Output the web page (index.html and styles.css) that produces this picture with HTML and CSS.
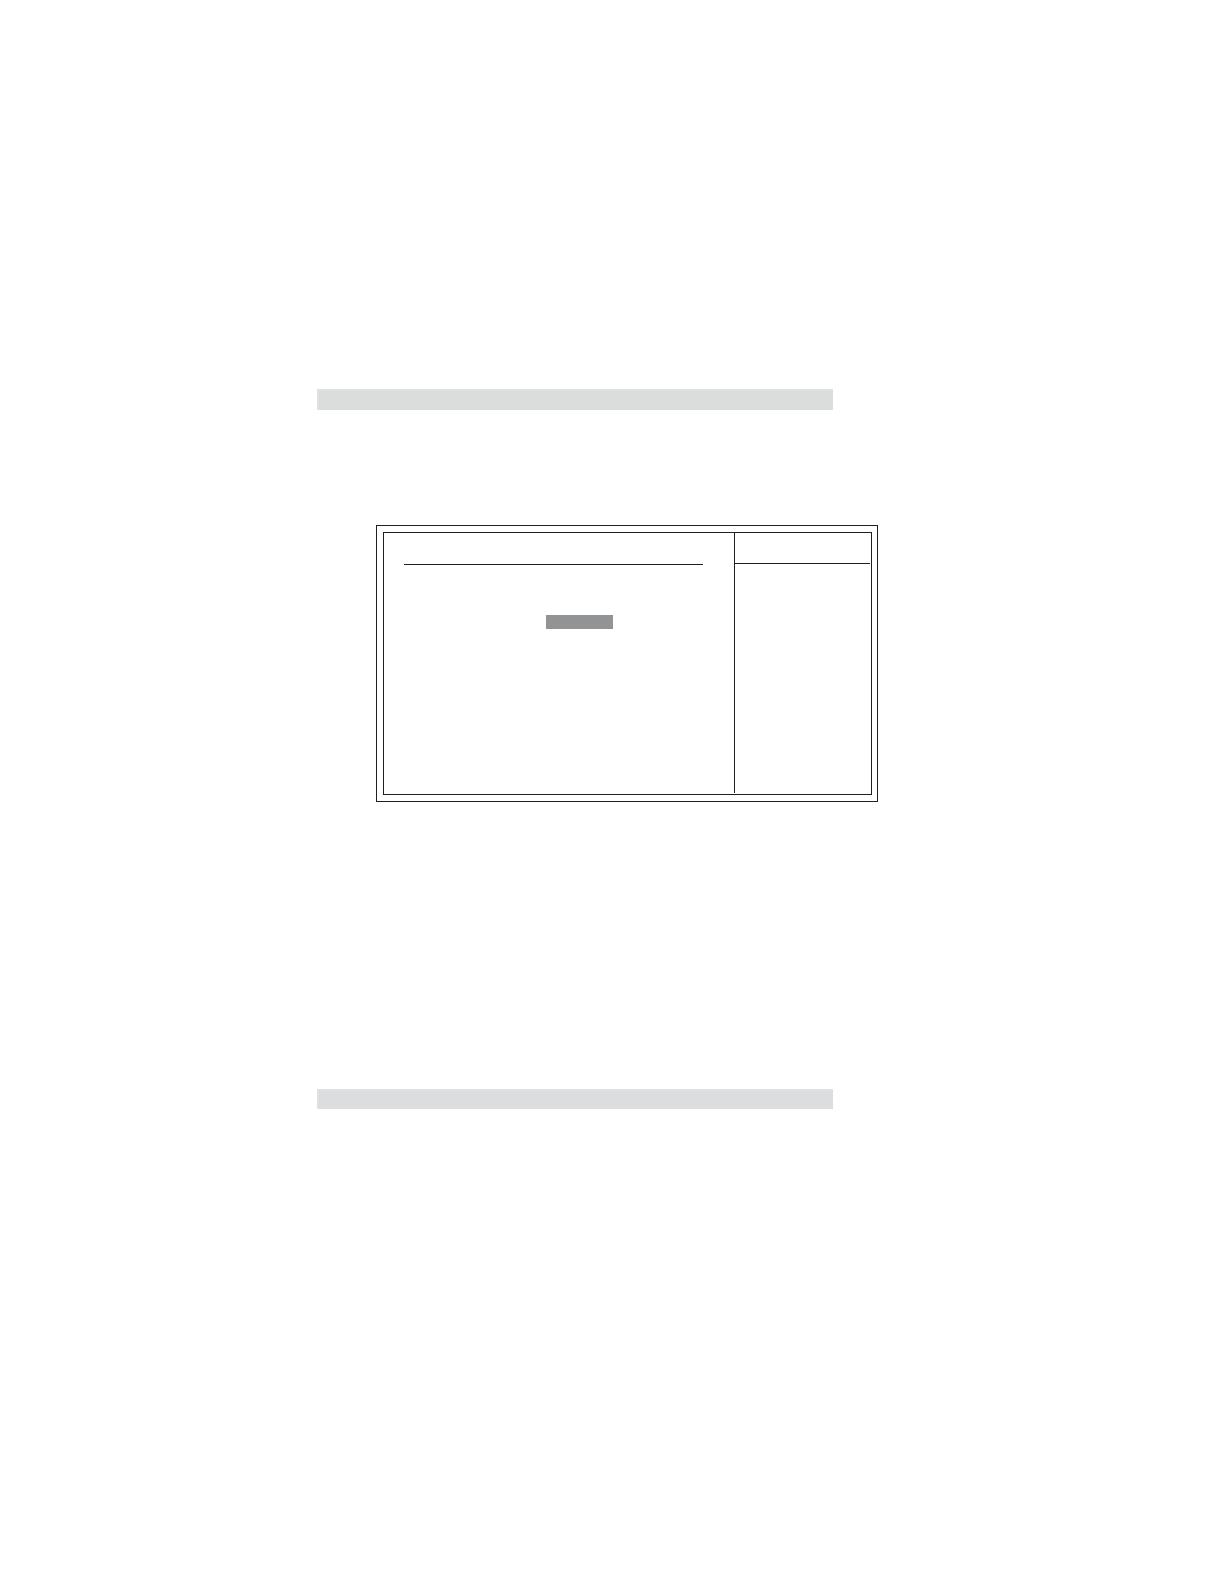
FILE: index.html
```
<!DOCTYPE html>
<html lang="en">
<head>
<meta charset="utf-8">
<title>Setup Utility</title>
<link rel="stylesheet" href="styles.css">
</head>
<body>
<main class="page">
 <header class="band header"></header>
 <section class="screen">
  <div class="frame">
   <div class="options">
    <div class="title"></div>
    <div class="selected"></div>
   </div>
   <aside class="help">
    <div class="help-title"></div>
   </aside>
  </div>
 </section>
 <footer class="band footer"></footer>
</main>
</body>
</html>
```
FILE: styles.css
```
body {
 margin: 0;
 background: #ffffff;
 font-family: "Liberation Sans", Arial, sans-serif;
}
.page {
 display: grid;
 grid-template-columns: 317fr 516fr 391fr;
 padding: 389px 0 475px;
}
.page > * {
 grid-column: 2;
}
.band {
 box-sizing: border-box;
 border-top: 2px solid #e0e0df;
 border-left: 2px solid #e0e0df;
}
.header {
 height: 21px;
 background: #dadddc;
}
.footer {
 height: 20px;
 background: #dbddde;
}

/* double ruled setup screen, hangs out past the bands on the right */
.screen {
 margin: 115px -45px 287px 59px;
 padding: 6px 5px 6px 6px;
 border: 1px solid #231f20;
}
.frame {
 display: grid;
 grid-template-columns: 1fr 137px;
 border: 1px solid #231f20;
}
.options {
 padding: 0 31px 165px 20px;
}
.title {
 height: 31px;
 border-bottom: 1px solid #231f20;
}
.selected {
 width: 67px;
 height: 14px;
 margin: 50px 0 0 142px;
 background: #929395;
}
.help {
 margin-bottom: 1px;
 border-left: 1px solid #231f20;
}
.help-title {
 height: 30px;
 margin-right: 1px;
 border-bottom: 1px solid #231f20;
}
```
